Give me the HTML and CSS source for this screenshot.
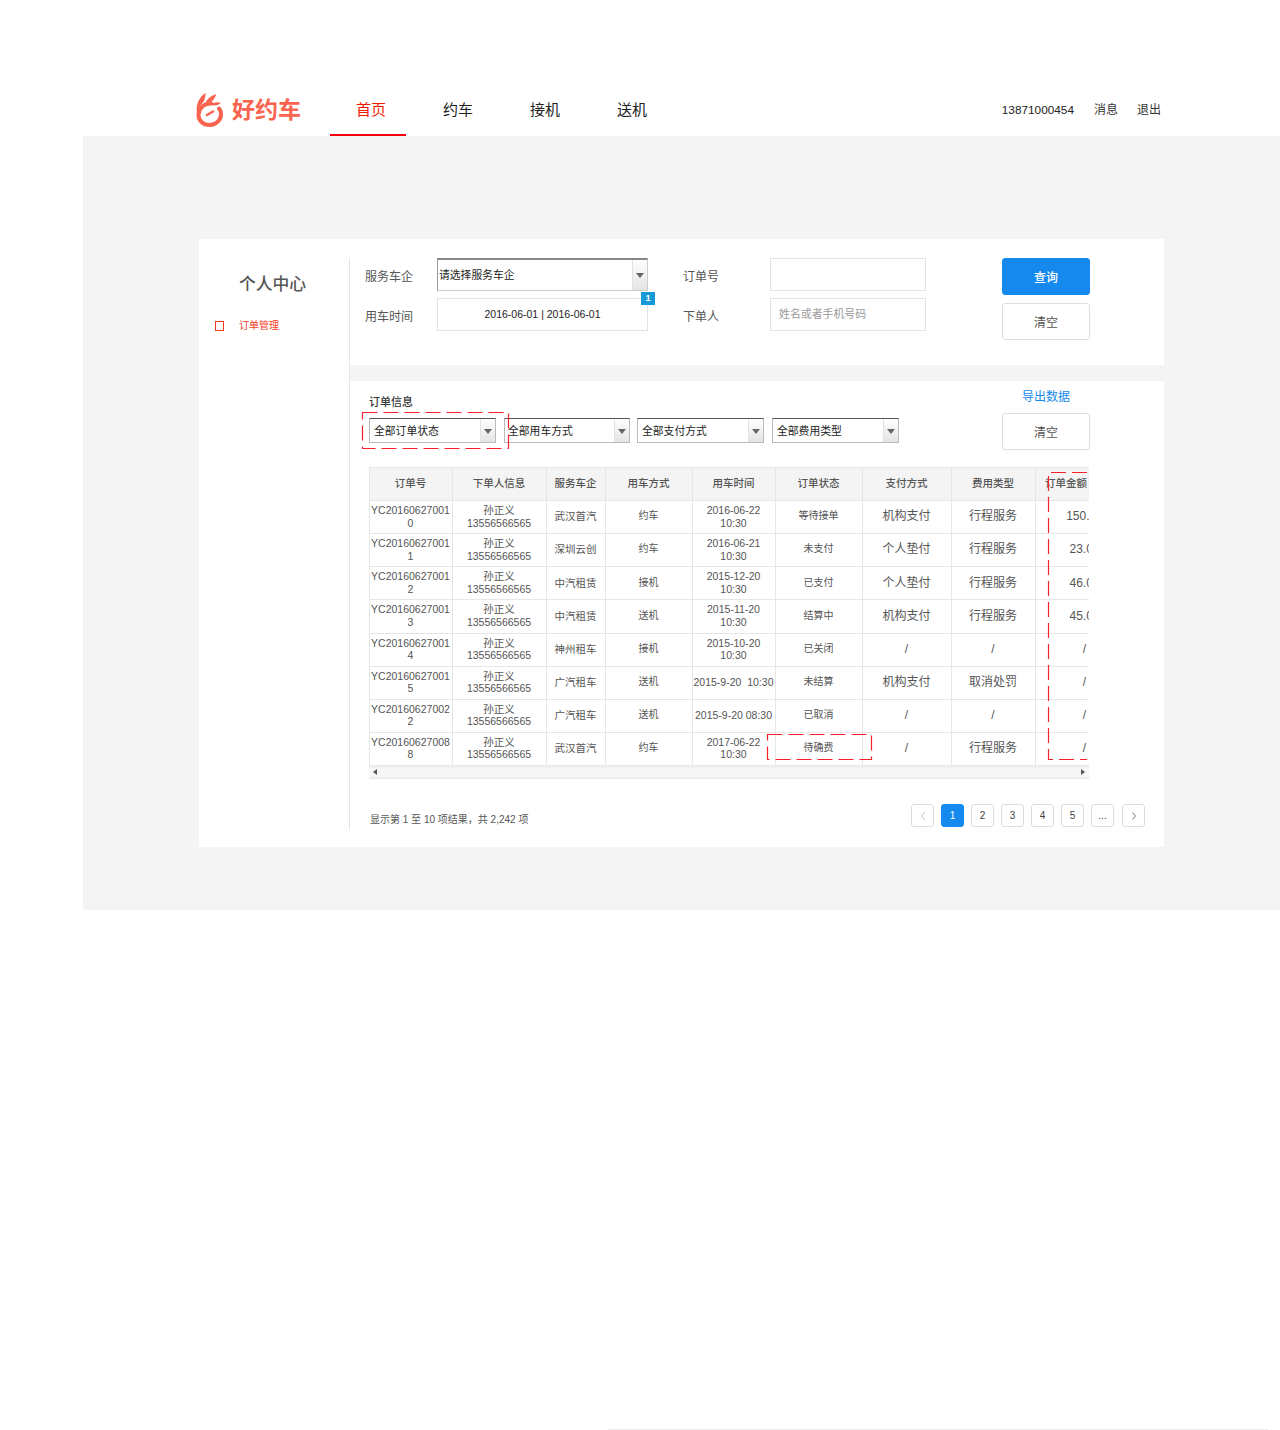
FILE: index.html
```html
<!DOCTYPE html>
<html lang="zh-CN">
<head>
<meta charset="utf-8">
<title>好约车</title>
<link rel="stylesheet" href="styles.css">
</head>
<body>
<header class="header">
  <div class="brand">
    <svg class="logo" viewBox="0 0 28 34" aria-hidden="true">
      <path d="M15 10.500C7 10.500 2.500 16 2.500 22 2.500 28 7.500 32 13.500 32 20 32 25.500 27 25 20.500 24.800 18 24 16.500 23 15.500" fill="none" stroke="#f9634f" stroke-width="4" stroke-linecap="round"/>
      <path d="M1 20C-.5 12 3 4 9.500 0 10 3 8.500 6 8 8 6 10 3 14 1 20Z" fill="#f9634f"/>
      <path d="M9 11C11 6 15 2.500 20.500 1 19 5 16 9 13 11Z" fill="#f9634f"/>
      <path d="M14 12C17 9.500 21 8.500 25 10 22 12.500 18 13 14 12Z" fill="#f9634f"/>
      <path d="M11 22L17 18.500" fill="none" stroke="#f9634f" stroke-width="2.600" stroke-linecap="round"/>
    </svg>
    <span class="brand-name">好约车</span>
  </div>
  <nav class="nav">
    <a class="nav-item active"><span class="nav-text">首页</span></a>
    <a class="nav-item"><span class="nav-text">约车</span></a>
    <a class="nav-item"><span class="nav-text">接机</span></a>
    <a class="nav-item"><span class="nav-text">送机</span></a>
  </nav>
  <div class="user">
    <span class="phone">13871000454</span>
    <span>消息</span>
    <span>退出</span>
  </div>
</header>

<main class="panel">
  <div class="card">
    <aside class="sidebar">
      <h2 class="side-title">个人中心</h2>
      <div class="side-item"><i class="side-check"></i><span>订单管理</span></div>
    </aside>

    <div class="content">
      <section class="search">
        <div class="search-grid">
          <label class="label">服务车企</label>
          <div class="select select-lg"><span>请选择服务车企</span><i class="select-btn"></i></div>
          <label class="label label-second">订单号</label>
          <input class="input" type="text">
          <label class="label">用车时间</label>
          <div class="date-wrap">
            <input class="input input-date" type="text" value="2016-06-01 | 2016-06-01">
            <span class="badge">1</span>
          </div>
          <label class="label label-second">下单人</label>
          <input class="input" type="text" placeholder="姓名或者手机号码">
        </div>
        <div class="actions">
          <button class="btn btn-primary">查询</button>
          <button class="btn">清空</button>
        </div>
      </section>

      <section class="orders">
        <div class="orders-top">
          <div class="filters-col">
            <h3 class="orders-title">订单信息</h3>
            <div class="filters">
              <div class="select select-f1"><span>全部订单状态</span><i class="select-btn"></i></div>
              <div class="select select-f2"><span>全部用车方式</span><i class="select-btn"></i></div>
              <div class="select select-f3"><span>全部支付方式</span><i class="select-btn"></i></div>
              <div class="select select-f4"><span>全部费用类型</span><i class="select-btn"></i></div>
            </div>
          </div>
          <div class="orders-actions">
            <a class="export">导出数据</a>
            <button class="btn">清空</button>
          </div>
        </div>

        <div class="table-wrap">
          <div class="table-clip">
            <table class="table">
              <colgroup>
                <col class="c1"><col class="c2"><col class="c3"><col class="c4"><col class="c5"><col class="c6"><col class="c7"><col class="c8"><col class="c9">
              </colgroup>
              <thead>
                <tr><th>订单号</th><th>下单人信息</th><th>服务车企</th><th>用车方式</th><th>用车时间</th><th>订单状态</th><th>支付方式</th><th>费用类型</th><th class="th-amount">订单金额</th></tr>
              </thead>
              <tbody>
                <tr><td>YC201606270010</td><td>孙正义<br>13556566565</td><td>武汉首汽</td><td class="sm">约车</td><td>2016-06-22<br>10:30</td><td class="sm">等待接单</td><td class="lg">机构支付</td><td class="lg">行程服务</td><td class="lg">150.00</td></tr>
                <tr><td>YC201606270011</td><td>孙正义<br>13556566565</td><td>深圳云创</td><td class="sm">约车</td><td>2016-06-21<br>10:30</td><td class="sm">未支付</td><td class="lg">个人垫付</td><td class="lg">行程服务</td><td class="lg">23.00</td></tr>
                <tr><td>YC201606270012</td><td>孙正义<br>13556566565</td><td>中汽租赁</td><td class="sm">接机</td><td>2015-12-20<br>10:30</td><td class="sm">已支付</td><td class="lg">个人垫付</td><td class="lg">行程服务</td><td class="lg">46.00</td></tr>
                <tr><td>YC201606270013</td><td>孙正义<br>13556566565</td><td>中汽租赁</td><td class="sm">送机</td><td>2015-11-20<br>10:30</td><td class="sm">结算中</td><td class="lg">机构支付</td><td class="lg">行程服务</td><td class="lg">45.00</td></tr>
                <tr><td>YC201606270014</td><td>孙正义<br>13556566565</td><td>神州租车</td><td class="sm">接机</td><td>2015-10-20<br>10:30</td><td class="sm">已关闭</td><td class="lg">/</td><td class="lg">/</td><td class="lg">/</td></tr>
                <tr><td>YC201606270015</td><td>孙正义<br>13556566565</td><td>广汽租车</td><td class="sm">送机</td><td>2015-9-20&nbsp; 10:30</td><td class="sm">未结算</td><td class="lg">机构支付</td><td class="lg">取消处罚</td><td class="lg">/</td></tr>
                <tr><td>YC201606270022</td><td>孙正义<br>13556566565</td><td>广汽租车</td><td class="sm">送机</td><td>2015-9-20 08:30</td><td class="sm">已取消</td><td class="lg">/</td><td class="lg">/</td><td class="lg">/</td></tr>
                <tr><td>YC201606270088</td><td>孙正义<br>13556566565</td><td>武汉首汽</td><td class="sm">约车</td><td>2017-06-22<br>10:30</td><td class="sm">待确费</td><td class="lg">/</td><td class="lg">行程服务</td><td class="lg">/</td></tr>
              </tbody>
            </table>
          </div>
          <div class="hscroll"><i class="arrow-left"></i><i class="arrow-right"></i></div>
        </div>

        <div class="table-foot">
          <span class="summary">显示第 1 至 10 项结果，共 2,242 项</span>
          <div class="pager">
            <a class="page page-nav"><svg viewBox="0 0 8 10" class="chev chev-off"><path d="M5.500 1.500L2.500 5l3 3.500"/></svg></a>
            <a class="page page-on">1</a>
            <a class="page">2</a>
            <a class="page">3</a>
            <a class="page">4</a>
            <a class="page">5</a>
            <a class="page">...</a>
            <a class="page page-nav page-next"><svg viewBox="0 0 8 10" class="chev"><path d="M2.500 1.500l3 3.500-3 3.500"/></svg></a>
          </div>
        </div>
      </section>
    </div>

    <svg class="marks" viewBox="0 0 965 608" aria-hidden="true">
      <rect x="163.500" y="173.500" width="146" height="36"/>
      <rect x="568.500" y="495.500" width="104" height="25"/>
      <path d="M888 233.500H849.500V520.500H888"/>
    </svg>
  </div>
</main>
<div class="end-line"></div>
</body>
</html>
```
FILE: styles.css
```css
* { box-sizing: border-box; }
html, body { margin: 0; padding: 0; background: #fff; }
body {
  font-family: "Liberation Sans", "Noto Sans CJK SC", sans-serif;
  color: #333;
  height: 1430px;
  overflow: hidden;
}

/* header */
.header {
  height: 136px;
  padding: 84px 119px 0 196px;
  display: flex;
  align-items: flex-start;
}
.brand { display: flex; align-items: center; height: 52px; width: 134px; flex: none; }
.logo { width: 28px; height: 34px; margin-top: -1px; flex: none; }
.brand-name {
  margin: -5px 0 0 8px;
  font-size: 23px;
  font-weight: 700;
  color: #f9634f;
  white-space: nowrap;
}
.nav { display: flex; gap: 11px; }
.nav-item {
  width: 76px;
  height: 52px;
  line-height: 52px;
  text-align: center;
  font-size: 15px;
  color: #222;
  border-bottom: 2px solid transparent;
}
.nav-text { margin-left: 6px; }
.nav-item.active { color: #f01a00; border-bottom-color: #f5000a; }
.user {
  margin-left: auto;
  display: flex;
  gap: 19px;
  height: 52px;
  line-height: 52px;
  font-size: 12px;
  color: #333;
}
.phone { font-size: 11.800px; margin-right: 1px; color: #222; }

/* gray panel */
.panel {
  margin-left: 83px;
  height: 774px;
  padding: 103px 116px 0 116px;
  background: #f4f4f4;
}
.card {
  position: relative;
  width: 965px;
  height: 608px;
  background: #fff;
  display: flex;
}

/* sidebar */
.sidebar {
  width: 151px;
  flex: none;
  margin: 19px 0 17px;
  border-right: 1px solid #e6e6e6;
}
.side-title {
  margin: 15px 0 0 40px;
  font-size: 16.800px;
  line-height: 24px;
  font-weight: 500;
  color: #555;
}
.side-item {
  margin: 20px 0 0 16px;
  display: flex;
  align-items: center;
  font-size: 10px;
  line-height: 18px;
  color: #f5391c;
}
.side-check {
  width: 9px;
  height: 10px;
  border: 1.500px solid #f5391c;
  margin-right: 15px;
}

/* search */
.content { flex: 1; min-width: 0; display: flex; flex-direction: column; background: #f4f4f4; }
.search {
  height: 126px;
  padding: 19px 74px 0 15px;
  display: flex;
  background: #fff;
}
.search-grid {
  display: grid;
  grid-template-columns: 72px 211px 122px 156px;
  grid-auto-rows: 33px;
  row-gap: 7px;
  width: 561px;
}
.label {
  font-size: 12px;
  line-height: 38px;
  color: #555;
  white-space: nowrap;
}
.label-second { margin-left: 35px; }
.input {
  display: block;
  width: 100%;
  height: 33px;
  border: 1px solid #e3e3e3;
  background: #fff;
  padding: 0 8px 2px;
  font: 10.900px "Liberation Sans", "Noto Sans CJK SC", sans-serif;
  color: #222;
  outline: 0;
}
.input::placeholder { color: #999; opacity: 1; }
.input-date { text-align: center; font-size: 10.500px; }
.date-wrap { position: relative; }
.badge {
  position: absolute;
  top: -6px;
  right: -7px;
  width: 14px;
  height: 13px;
  background: #1798d8;
  color: #fff;
  font-size: 9px;
  font-weight: 700;
  line-height: 13px;
  text-align: center;
}
.actions {
  margin-left: 76px;
  display: flex;
  flex-direction: column;
  gap: 8px;
}
.btn {
  display: block;
  width: 88px;
  height: 37px;
  padding: 0;
  border: 1px solid #ddd;
  border-radius: 3px;
  background: #fff;
  color: #555;
  font: 12px "Liberation Sans", "Noto Sans CJK SC", sans-serif;
}
.btn-primary { background: #1589ee; border-color: #1589ee; color: #fff; font-weight: 500; }

/* fake selects */
.select {
  position: relative;
  height: 25px;
  background: #fff;
  border: 1px solid #bbb;
  border-top: 1px solid #555;
  font-size: 10.800px;
  line-height: 25px;
  color: #222;
  padding-left: 4px;
  white-space: nowrap;
}
.select-lg {
  height: 33px;
  border-top: 2px solid #888;
  border-color: #888 #ccc #ccc #999;
  line-height: 31px;
  padding-left: 1px;
}
.select-f1 { width: 127px; }
.select-f2 { width: 126px; padding-left: 3px; }
.select-f3 { width: 127px; }
.select-f4 { width: 127px; }
.select-btn {
  position: absolute;
  top: 0;
  right: 0;
  bottom: 0;
  width: 15px;
  background: linear-gradient(#fff, #e4e4e4);
  border-left: 1px solid #e2e2e2;
}
.select-btn::after {
  content: "";
  position: absolute;
  left: 3px;
  top: 50%;
  margin-top: -2px;
  border: 4px solid transparent;
  border-top: 5px solid #666;
  border-bottom: 0;
}

/* orders */
.orders {
  flex: 1;
  margin-top: 16px;
  padding: 0 19px;
  background: #fff;
}
.orders-top { display: flex; justify-content: space-between; height: 86px; margin-right: 55px; }
.filters-col { width: 530px; }
.orders-title {
  margin: 15px 0 0;
  font-size: 11px;
  line-height: 13px;
  font-weight: 500;
  color: #333;
}
.filters { display: flex; gap: 8px; margin-top: 9px; }
.filters .select-f3 { margin-left: -1px; }
.orders-actions {
  display: flex;
  flex-direction: column;
  align-items: center;
  padding-top: 9px;
}
.export { font-size: 12px; line-height: 15px; color: #1589ee; margin-bottom: 8px; }

/* table */
.table-wrap { width: 720px; }
.table-clip { width: 720px; height: 298px; overflow: hidden; }
.table {
  table-layout: fixed;
  border-collapse: collapse;
  width: 762px;
  color: #555;
  font-size: 10.500px;
  line-height: 12.500px;
}
.c1 { width: 83px; } .c2 { width: 94px; } .c3 { width: 59px; }
.c4 { width: 87px; } .c5 { width: 83px; } .c6 { width: 87px; }
.c7 { width: 89px; } .c8 { width: 84px; } .c9 { width: 96px; }
.table th, .table td {
  border: 1px solid #e6e6e6;
  text-align: center;
  padding: 0 1px 1px 0;
  word-break: break-all;
}
.table th {
  height: 33px;
  background: #f4f4f4;
  font-size: 10.500px;
  font-weight: 500;
  color: #555;
}
.table th.th-amount { text-align: left; padding-left: 9px; }
.table td { height: 33.125px; }
.table td.sm { font-size: 10px; }
.table td.lg { font-size: 12px; }
.table td:last-child { padding-left: 3px; }

/* faux horizontal scrollbar */
.hscroll {
  position: relative;
  height: 14px;
  background: linear-gradient(#e6e6e6, #f7f7f7 25%, #f5f5f5 85%, #e4e4e4);
}
.arrow-left, .arrow-right {
  position: absolute;
  top: 4px;
  border: 3.500px solid transparent;
}
.arrow-left { left: 4px; border-right: 4px solid #555; border-left: 0; }
.arrow-right { right: 4px; border-left: 4px solid #555; border-right: 0; }

/* footer of table */
.table-foot {
  display: flex;
  justify-content: space-between;
  padding: 25px 0 0 1px;
}
.summary { font-size: 10px; line-height: 32px; color: #555; }
.pager { display: flex; gap: 7px; }
.page {
  width: 23px;
  height: 23px;
  border: 1px solid #ddd;
  border-radius: 3px;
  font-size: 10px;
  line-height: 21px;
  text-align: center;
  color: #444;
  display: flex;
  align-items: center;
  justify-content: center;
}
.page-on { background: #1589ee; border-color: #1589ee; color: #fff; }
.page-next { margin-left: 1px; }
.chev { width: 8px; height: 10px; fill: none; stroke: #777; stroke-width: 1; }
.chev-off { stroke: #bbb; }

/* dashed annotation marks */
.marks {
  position: absolute;
  left: 0;
  top: 0;
  width: 965px;
  height: 608px;
  pointer-events: none;
  fill: none;
  stroke: #f5222d;
  stroke-width: 1.200;
  stroke-dasharray: 15 6;
}

.end-line {
  margin: 519px 12px 0 608px;
  height: 1px;
  background: #eeeeee;
}
```
